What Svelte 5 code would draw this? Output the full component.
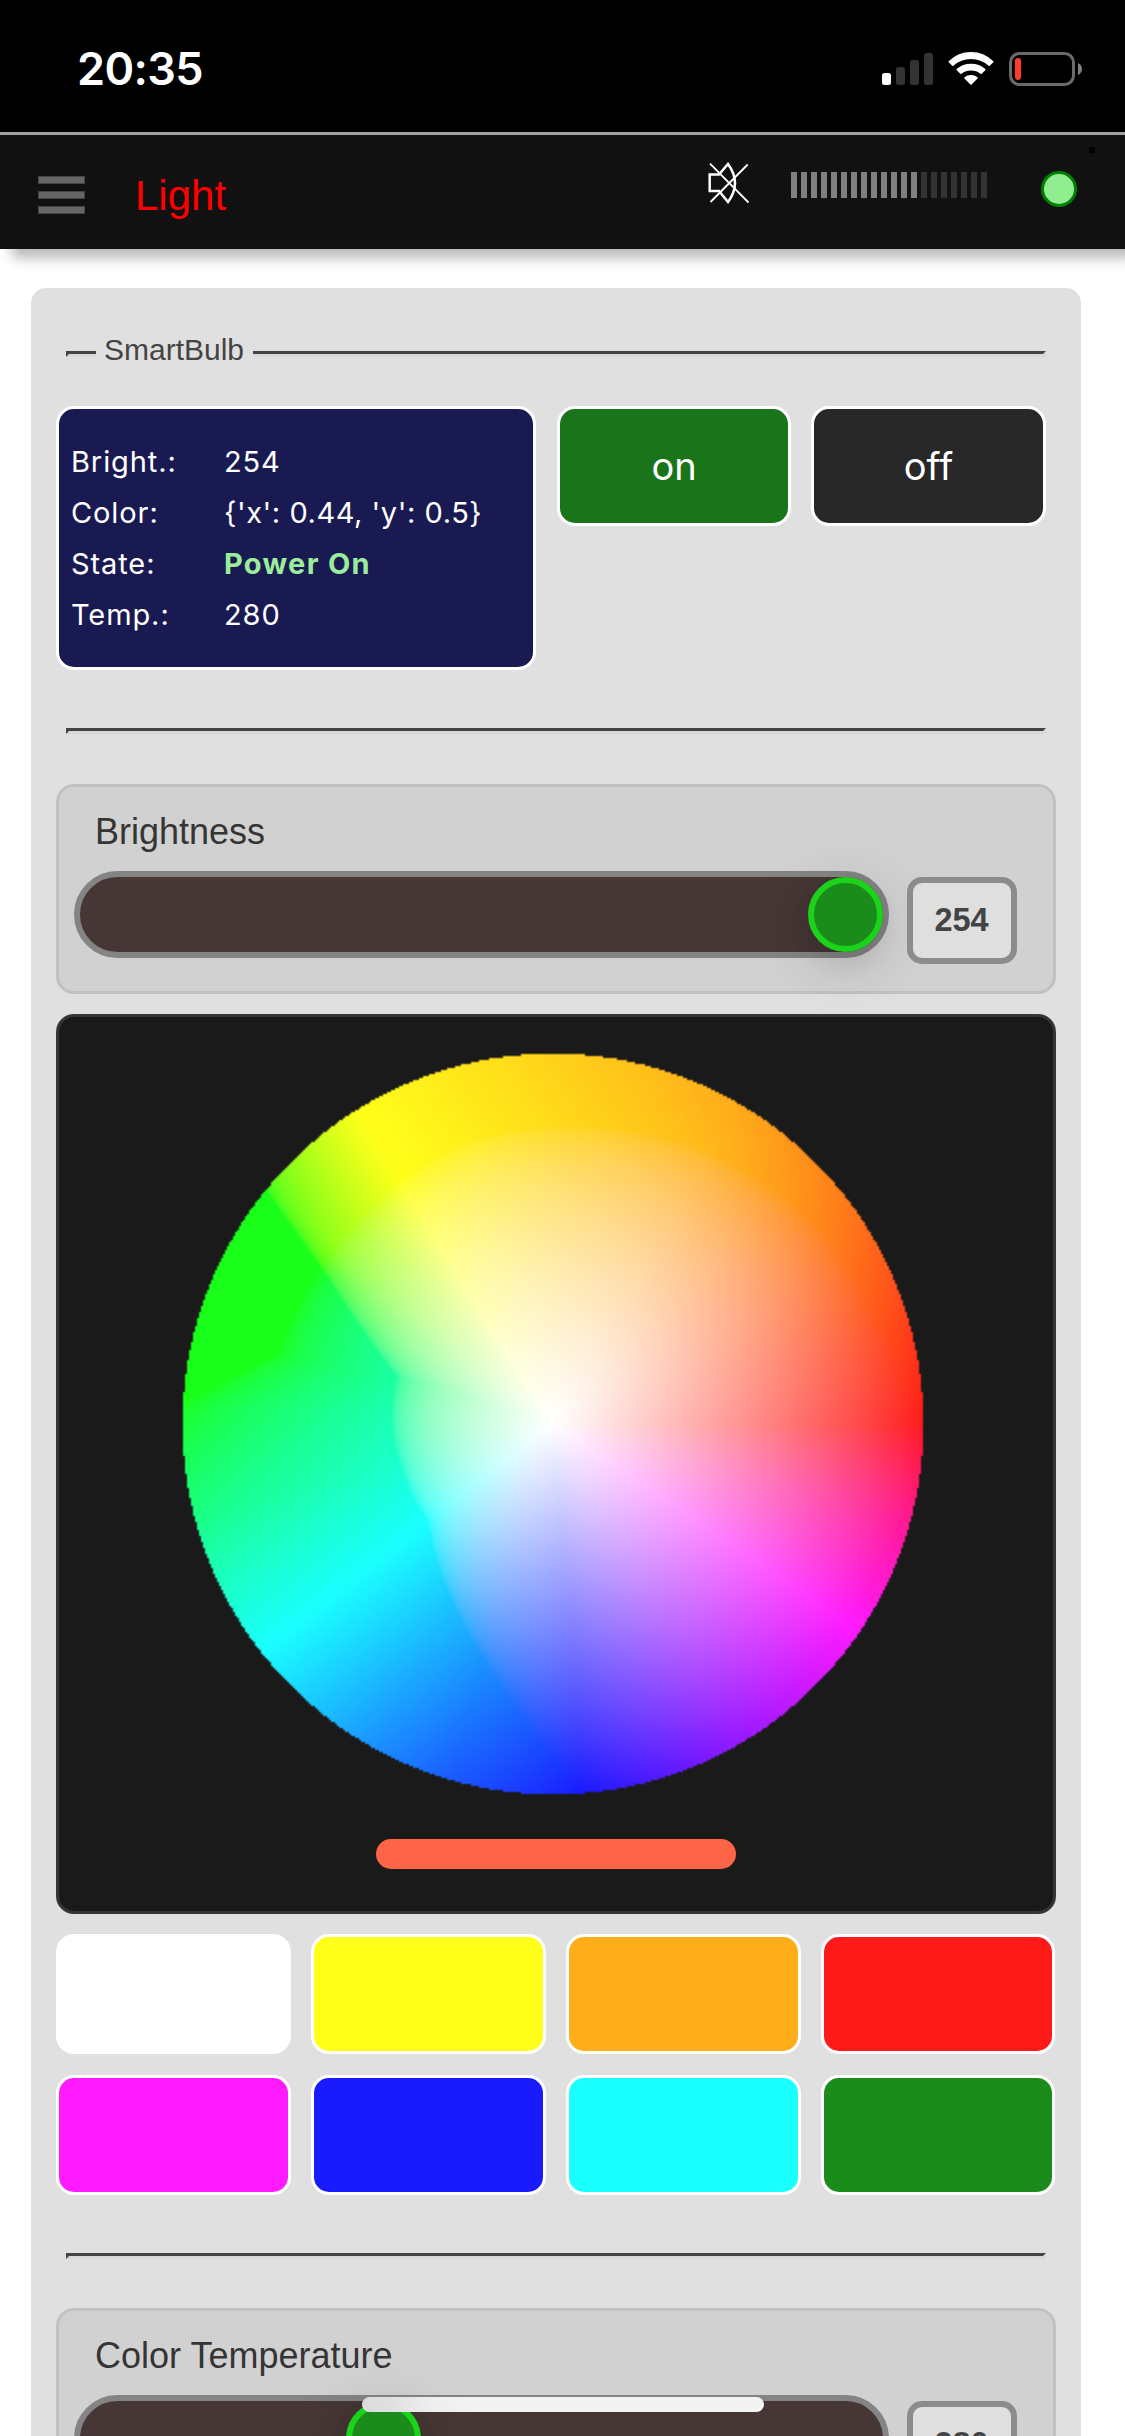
<script>
  import { onMount } from 'svelte';

  const info = [
    { label: 'Bright.:', value: '254' },
    { label: 'Color:', value: "{'x': 0.44, 'y': 0.5}", tight: true },
    { label: 'State:', value: 'Power On', strong: true },
    { label: 'Temp.:', value: '280' }
  ];
  const swatches = ['white', 'yellow', 'orange', 'red', 'magenta', 'blue', 'cyan', 'green'];
  const sliders = {
    brightness: { label: 'Brightness', value: 254, offset: 728 },
    temperature: { label: 'Color Temperature', value: 280, offset: 266 }
  };
  const meter = Array.from({ length: 20 }, (_, i) => i < 13);

  // How fast each channel (R, G, B) fades from the white centre, as [angle in degrees, slope].
  const fade = [
    [[0, 0], [122, 0], [129, 0.45], [135, 0.76], [140.8, 1], [146.6, 1.357], [151, 1.59], [156, 1.87], [163, 2.27], [180, 2.3], [197, 2.36], [218, 2.34], [241, 1.8], [254, 1.5], [266, 1.21], [274.8, 1], [300, 0.47], [326, 0], [360, 0]],
    [[0, 1], [15, 0.9], [30, 0.77], [45, 0.63], [60, 0.51], [90, 0.29], [122, 0], [217.9, 0], [241, 0.48], [254, 0.72], [274.8, 1], [326, 1.04], [360, 1]],
    [[0, 1], [20, 1.09], [36, 1.12], [58, 1.18], [84, 1.24], [108, 1.257], [122, 1.295], [145, 1.33], [165.6, 1.31], [177, 1], [193.7, 0.68], [217.9, 0], [326, 0], [345, 0.5], [360, 1]]
  ];
  // Tone curve exponents per channel, as [angle in degrees, exponent].
  const tone = [
    [[0, 1], [122, 0.45], [218, 0.45], [241, 0.5], [254, 0.6], [266, 0.8], [275, 1], [360, 1]],
    [[0, 0.9], [30, 0.75], [60, 0.65], [122, 0.65], [217.9, 1], [326, 1], [360, 0.9]],
    [[0, 0.9], [30, 0.7], [60, 0.6], [165, 0.6], [180, 0.72], [217.9, 0.75], [326, 1], [360, 0.9]]
  ];

  function lookup(table, a) {
    let i = 1;
    while (i < table.length - 1 && table[i][0] < a) i++;
    const [a0, k0] = table[i - 1];
    const [a1, k1] = table[i];
    return k0 + ((k1 - k0) * (a - a0)) / (a1 - a0);
  }

  let wheel;
  onMount(() => {
    const n = 372;
    const ctx = wheel.getContext('2d');
    const img = ctx.createImageData(n, n);
    const radius = 185.2;
    for (let y = 0; y < n; y++) {
      for (let x = 0; x < n; x++) {
        const dx = x + 0.5 - n / 2;
        const dy = n / 2 - y - 0.5;
        const r = Math.hypot(dx, dy) / radius;
        if (r > 1) continue;
        const a = ((Math.atan2(dy, dx) * 180) / Math.PI + 360) % 360;
        const p = (y * n + x) * 4;
        for (let c = 0; c < 3; c++) {
          const v = Math.min(1, Math.max(0, 1 - r * lookup(fade[c], a)));
          img.data[p + c] = 26 + 229 * Math.pow(v, lookup(tone[c], a));
        }
        img.data[p + 3] = 255;
      }
    }
    ctx.putImageData(img, 0, 0);
  });
</script>

{#snippet slider(s)}
  <section class="slider">
    <div class="slider-label">{s.label}</div>
    <div class="slider-row">
      <div class="track"><div class="thumb" style="margin-left: {s.offset}px"></div></div>
      <div class="value">{s.value}</div>
    </div>
  </section>
{/snippet}

<div class="screen">
  <div class="status">
    <span class="time">20:35</span>
    <svg class="status-icons" width="202" height="36" viewBox="881 51 202 36">
      <rect x="882" y="73" width="9" height="12" rx="2.5" fill="#fff" />
      <rect x="896" y="67" width="9" height="18" rx="2.5" fill="#333" />
      <rect x="910" y="60" width="9" height="25" rx="2.5" fill="#333" />
      <rect x="924" y="53" width="9" height="32" rx="2.5" fill="#333" />
      <path fill="#fff" d="M948.7 61.2Q958 52 971 52T993.3 61.2Q993.8 61.8 993.3 62.3L989.8 65.7Q989.2 66.2 988.6 65.7Q981 59 971 59T953.4 65.7Q952.8 66.2 952.2 65.7L948.7 62.3Q948.2 61.8 948.7 61.2ZM956.7 69Q962.6 63.7 971 63.7T985.3 69Q985.8 69.6 985.3 70.2L981.7 73.8Q981.1 74.3 980.5 73.8Q976.3 70.5 971 70.5T961.5 73.8Q960.9 74.3 960.3 73.8L956.7 70.2Q956.2 69.6 956.7 69ZM964.5 77.3Q967.2 75 971 75T977.5 77.3Q978.1 77.9 977.5 78.5L971.6 84.6Q971 85.2 970.4 84.6L964.5 78.5Q963.9 77.9 964.5 77.3Z" />
      <rect x="1010.5" y="53.5" width="63" height="31" rx="9" fill="none" stroke="#6b6b6b" stroke-width="3" />
      <rect x="1015" y="58" width="6" height="22" rx="3" fill="#ff3b30" />
      <path d="M1078 63Q1082 65 1082 69T1078 75Z" fill="#808080" />
    </svg>
  </div>

  <header>
    <div class="menu"><i></i><i></i><i></i></div>
    <div class="title">Light</div>
    <svg class="mute" width="42" height="42" viewBox="708 162 42 42" fill="none" stroke="#fff">
      <path stroke-width="2.5" d="M709.7 174.5H719L728 164Q742 183 728 202L719 191H709.7Z" />
      <path stroke-width="1.8" d="M710 163.7L748.5 202.5M747.7 164.5L710.5 202" />
    </svg>
    <div class="meter">
      {#each meter as on}<i class:lit={on}></i>{/each}
    </div>
    <div class="dot"></div>
    <div class="speck"></div>
  </header>

  <main>
    <div class="legend">
      <div class="rule start"></div>
      <span>SmartBulb</span>
      <div class="rule end"></div>
    </div>

    <div class="controls">
      <div class="info">
        {#each info as row}
          <span>{row.label}</span>
          <span class:strong={row.strong} class:tight={row.tight}>{row.value}</span>
        {/each}
      </div>
      <button class="on">on</button>
      <button class="off">off</button>
    </div>

    <div class="rule"></div>
    {@render slider(sliders.brightness)}

    <div class="picker">
      <canvas bind:this={wheel} width="372" height="372"></canvas>
      <div class="picked"></div>
    </div>

    <div class="swatches">
      {#each swatches as name}<div class="swatch {name}"></div>{/each}
    </div>

    <div class="rule"></div>
    {@render slider(sliders.temperature)}
  </main>

  <div class="home"></div>
</div>

<style>
  :global(body) { margin: 0; background: #fff; }
  .screen {
    position: relative;
    width: 1125px;
    height: 2436px;
    overflow: hidden;
    background: #fff;
    font-family: "Liberation Sans", Arial, sans-serif;
  }
  .screen, .screen * { box-sizing: border-box; }

  .status {
    display: flex;
    justify-content: space-between;
    align-items: flex-start;
    height: 132px;
    padding: 46px 42px 0 77px;
    background: #000;
  }
  .time { color: #fff; font: 600 45px/45px Inter, sans-serif; letter-spacing: -0.6px; }
  .status-icons { margin-top: 5px; }

  header {
    display: flex;
    align-items: flex-start;
    height: 117px;
    padding-left: 38px;
    border-top: 3px solid #a0a0a0;
    background: #111;
    box-shadow: 12px 9px 12px rgba(0, 0, 0, 0.28);
  }
  .menu { display: grid; gap: 7px; margin-top: 41px; width: 47px; }
  .menu i { height: 8px; background: #666; border: 1px solid #444; }
  .title { margin: 37px 0 0 50px; width: 573px; color: #f00; font-size: 42px; line-height: 48px; }
  .mute { margin-top: 27px; }
  .meter { display: flex; gap: 4px; margin: 37px 0 0 41px; }
  .meter i { width: 6px; height: 26px; background: #333; }
  .meter .lit { background: #808080; }
  .dot {
    width: 36px;
    height: 36px;
    margin: 36px 0 0 54px;
    border: 3px solid #008000;
    border-radius: 50%;
    background: #90ee90;
  }
  .speck { width: 6px; height: 6px; margin: 12px 0 0 12px; background: #000; }

  main {
    width: 1050px;
    height: 2300px;
    margin: 39px 0 0 31px;
    padding: 44px 25px 0;
    border-radius: 15px;
    background: #e0e0e0;
  }

  .rule {
    width: 980px;
    height: 6px;
    margin: 58px 0 50px 10px;
    border: 3px solid;
    border-color: #444 #d8d8d8 #d8d8d8 #444;
  }
  .legend { display: flex; width: 980px; height: 36px; margin-left: 10px; color: #444; font-size: 30px; line-height: 36px; }
  .legend span { width: 157px; padding-left: 8px; }
  .rule.start { width: 30px; margin: 19px 0 0; border-right: 0; }
  .rule.end { flex: 1; width: auto; margin: 19px 0 0; border-left: 0; }

  .controls { display: flex; align-items: flex-start; margin-top: 38px; }
  .info {
    display: grid;
    grid-template-columns: 153px 1fr;
    grid-auto-rows: 51px;
    width: 480px;
    height: 264px;
    padding: 27px 0 0 12px;
    border: 3px solid #fff;
    border-radius: 18px;
    background: #1a1a53;
    color: #fff;
    font: 400 29px/51px Inter, sans-serif;
    letter-spacing: 0.9px;
    white-space: nowrap;
  }
  .strong { color: #9bed9b; font-weight: 700; letter-spacing: 1.3px; }
  .tight { letter-spacing: 0.55px; }
  button {
    width: 234px;
    height: 120px;
    margin: 0 0 0 21px;
    padding: 0 0 1px;
    border: 3px solid #fff;
    border-radius: 18px;
    color: #fff;
    font: 400 38px/46px Inter, sans-serif;
  }
  .on { background: #1a741a; }
  .off { width: 235px; margin-left: 20px; background: #282828; }

  .slider { height: 210px; padding: 24px 15px 0; border: 3px solid #c1c1c1; border-radius: 18px; background: #d1d1d1; }
  .slider-label { height: 42px; padding-left: 21px; color: #353535; font-size: 36px; line-height: 42px; }
  .slider-row { display: flex; margin-top: 18px; }
  .track { width: 815px; height: 87px; border: 6px solid #848484; border-radius: 44px; background: #463636; }
  .thumb {
    width: 75px;
    height: 75px;
    border: 6px solid #1ad31a;
    border-radius: 50%;
    background: #1b8b1b;
    box-shadow: 0 12px 24px rgba(0, 0, 0, 0.06), 0 12px 60px rgba(0, 0, 0, 0.17);
  }
  .value {
    width: 110px;
    height: 87px;
    margin: 6px 0 0 18px;
    padding-right: 1px;
    border: 6px solid #8c8c8c;
    border-radius: 15px;
    background: #dfdfdf;
    color: #444;
    font-weight: 700;
    font-size: 32.5px;
    line-height: 75px;
    text-align: center;
  }

  .picker {
    display: flex;
    flex-direction: column;
    height: 900px;
    margin: 20px 0;
    padding: 35px 0 0 122px;
    border: 3px solid #353535;
    border-radius: 18px;
    background: #1a1a1a;
  }
  canvas { width: 744px; height: 744px; }
  .picked { width: 360px; height: 30px; margin: 43px 0 0 195px; border-radius: 15px; background: #ff6449; }

  .swatches { display: grid; grid-template-columns: 235px 235px 235px 234px; gap: 21px 20px; }
  .swatch { height: 120px; border: 3px solid #fff; border-radius: 18px; }
  .white { background: #fff; }
  .yellow { background: #ffff1a; }
  .orange { background: #ffae1a; }
  .red { background: #ff1a1a; }
  .magenta { background: #ff1aff; }
  .blue { background: #1a1aff; }
  .cyan { background: #1affff; }
  .green { background: #1b8b1b; }
  .swatches + .rule { margin-bottom: 49px; }

  .home {
    position: absolute;
    left: 362px;
    top: 2397px;
    width: 402px;
    height: 15px;
    border-radius: 8px;
    background: linear-gradient(90deg, #dcdcdc 0, #e0e0e0 28px, #eee 70px, #f3f3f3 110px);
  }
</style>
